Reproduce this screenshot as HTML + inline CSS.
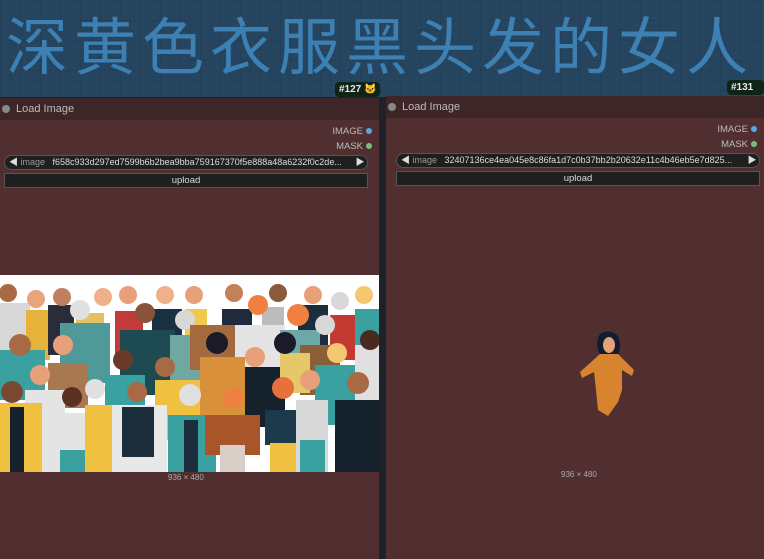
<!DOCTYPE html>
<html><head><meta charset="utf-8"><style>
*{margin:0;padding:0;box-sizing:border-box}
body{width:764px;height:559px;overflow:hidden;background:#1e2228;font-family:"Liberation Sans","Noto Sans CJK SC",sans-serif;position:relative}
.top{position:absolute;left:0;top:0;width:764px;height:97px;background:#264560;background-image:linear-gradient(rgba(0,0,0,.06) 1px,transparent 1px),linear-gradient(90deg,rgba(0,0,0,.06) 1px,transparent 1px);background-size:10px 10px}
.title{position:absolute;left:6px;top:2px;font-size:62px;line-height:80px;color:#3d80b4;letter-spacing:6px;white-space:nowrap;font-family:"Noto Sans CJK SC",sans-serif}
.badge{position:absolute;height:15px;background:#0f2418;color:#e8e8e8;font-size:10px;font-weight:bold;line-height:15px;padding:0 4px;border-radius:4px}
.node{position:absolute;background:#512f31}
.hd{height:22px;background:#3e2528;color:#bbb;font-size:11px;line-height:22px;padding-left:16px;position:relative}
.hd:before{content:"";position:absolute;left:2px;top:7px;width:8px;height:8px;border-radius:50%;background:#888}
.out{position:absolute;right:7px;font-size:9.5px;color:#bbb}
.out i{display:inline-block;width:6px;height:6px;border-radius:50%;margin-left:3px;vertical-align:middle}
.combo{position:absolute;height:15px;background:#1f1f1f;border:1px solid #555;border-radius:8px;font-size:9px;color:#ddd;line-height:13px;padding-left:4px;white-space:nowrap;overflow:hidden}
.combo span{color:#999}
.combo b{position:absolute;right:0;top:0;width:14px;text-align:center;background:#1f1f1f;font-weight:normal}
.btn{position:absolute;height:15px;background:#1f1f1f;border:1px solid #555;font-size:9.5px;color:#ddd;line-height:13px;text-align:center}
.dim{position:absolute;font-size:8px;color:#aaa}
</style></head><body>
<div class="top"><div class="title">深黄色衣服黑头发的女人</div></div>
<div class="badge" style="left:335px;top:82px">#127 🐱</div>
<div class="badge" style="left:727px;top:80px">#131 🐱</div>

<div class="node" style="left:0;top:98px;width:379px;height:461px">
 <div class="hd">Load Image</div>
 <div class="out" style="top:28px">IMAGE<i style="background:#5ea6e0"></i></div>
 <div class="out" style="top:43px">MASK<i style="background:#79c079"></i></div>
 <div class="combo" style="left:4px;top:57px;width:364px">◀ <span>image</span>&nbsp;&nbsp; f658c933d297ed7599b6b2bea9bba759167370f5e888a48a6232f0c2de...<b>▶</b></div>
 <div class="btn" style="left:4px;top:75px;width:364px">upload</div>
 <svg style="position:absolute;left:0;top:177px" width="379" height="197" viewBox="0 0 379 197">
  <rect width="379" height="197" fill="#fff"/>
  <g>
   <rect x="0" y="28" width="30" height="60" fill="#d8d8d8"/><circle cx="8" cy="18" r="9" fill="#a86a45"/>
   <rect x="26" y="35" width="24" height="50" fill="#e7b23a"/><circle cx="36" cy="24" r="9" fill="#e9a47c"/>
   <rect x="48" y="30" width="26" height="50" fill="#2c2c38"/><circle cx="62" cy="22" r="9" fill="#c08060"/>
   <rect x="76" y="38" width="28" height="60" fill="#e3c060"/><circle cx="103" cy="22" r="9" fill="#f0b08a"/>
   <rect x="115" y="36" width="28" height="50" fill="#c33a3a"/><circle cx="128" cy="20" r="9" fill="#e8a07a"/>
   <rect x="152" y="34" width="30" height="50" fill="#18303f"/><circle cx="165" cy="20" r="9" fill="#f0b08a"/>
   <rect x="185" y="34" width="22" height="40" fill="#f0c850"/><circle cx="194" cy="20" r="9" fill="#e8a07a"/>
   <rect x="222" y="34" width="30" height="45" fill="#1f2a3c"/><circle cx="234" cy="18" r="9" fill="#c48058"/>
   <rect x="262" y="32" width="22" height="30" fill="#bcbcbc"/><circle cx="278" cy="18" r="9" fill="#8a5a3a"/>
   <rect x="298" y="30" width="30" height="45" fill="#1c2d3c"/><circle cx="313" cy="20" r="9" fill="#e8a07a"/>
   <rect x="330" y="40" width="40" height="45" fill="#c23a32"/><circle cx="340" cy="26" r="9" fill="#d8d8d8"/>
   <rect x="355" y="34" width="24" height="50" fill="#3aa0a0"/><circle cx="364" cy="20" r="9" fill="#f4c870"/>
  </g>
  <g>
   <rect x="60" y="48" width="50" height="60" fill="#4f9a98"/><circle cx="80" cy="35" r="10" fill="#e0e0e0"/>
   <rect x="120" y="55" width="55" height="65" fill="#1e4b52"/><circle cx="145" cy="38" r="10" fill="#8a5238"/>
   <rect x="170" y="60" width="36" height="65" fill="#6fa8a0"/><circle cx="185" cy="45" r="10" fill="#d8d8d8"/>
   <rect x="190" y="50" width="45" height="45" fill="#a36a40"/>
   <rect x="235" y="50" width="50" height="55" fill="#e4e4e4"/><circle cx="258" cy="30" r="10" fill="#f08040"/>
   <rect x="280" y="55" width="40" height="45" fill="#6ca8a8"/><circle cx="298" cy="40" r="11" fill="#f08040"/>
   <rect x="300" y="70" width="40" height="50" fill="#8a6038"/><circle cx="325" cy="50" r="10" fill="#d8d8d8"/>
   <rect x="0" y="75" width="45" height="50" fill="#3aa0a0"/><circle cx="20" cy="70" r="11" fill="#a86a45"/>
   <rect x="48" y="88" width="40" height="45" fill="#a87850"/><circle cx="63" cy="70" r="10" fill="#e8a07a"/>
   <rect x="105" y="100" width="40" height="50" fill="#3aa0a0"/><circle cx="123" cy="85" r="10" fill="#6a3a28"/>
   <rect x="200" y="82" width="45" height="70" fill="#d8903a"/><circle cx="217" cy="68" r="11" fill="#1a1a28"/>
   <rect x="245" y="92" width="40" height="60" fill="#15222c"/><circle cx="255" cy="82" r="10" fill="#e8a07a"/>
   <rect x="280" y="78" width="30" height="40" fill="#e4c86a"/><circle cx="285" cy="68" r="11" fill="#1a1a28"/>
   <rect x="315" y="90" width="42" height="60" fill="#3aa0a0"/><circle cx="337" cy="78" r="10" fill="#f4c870"/>
   <rect x="355" y="70" width="24" height="60" fill="#e0e0e0"/><circle cx="370" cy="65" r="10" fill="#4a2a20"/>
   <rect x="155" y="105" width="45" height="60" fill="#f0c040"/><circle cx="165" cy="92" r="10" fill="#a86a45"/>
   <rect x="25" y="115" width="40" height="82" fill="#e4e4e4"/><circle cx="40" cy="100" r="10" fill="#e8a07a"/>
  </g>
  <g>
   <rect x="0" y="128" width="42" height="69" fill="#f0c040"/><rect x="10" y="132" width="14" height="65" fill="#15222c"/><circle cx="12" cy="117" r="11" fill="#7a4a30"/>
   <rect x="55" y="138" width="40" height="59" fill="#e4e4e4"/><rect x="60" y="175" width="30" height="22" fill="#3aa0a0"/><circle cx="72" cy="122" r="10" fill="#5a3020"/>
   <rect x="85" y="130" width="30" height="67" fill="#f0c040"/><circle cx="95" cy="114" r="10" fill="#e0e0e0"/>
   <rect x="112" y="130" width="55" height="67" fill="#e8e8e8"/><rect x="122" y="132" width="32" height="50" fill="#1c2d3c"/><circle cx="137" cy="117" r="10" fill="#a86a45"/>
   <rect x="168" y="140" width="48" height="57" fill="#3aa0a0"/><rect x="184" y="145" width="14" height="52" fill="#1c2d3c"/><circle cx="190" cy="120" r="11" fill="#e0e0e0"/>
   <rect x="205" y="140" width="55" height="40" fill="#a8552a"/><rect x="220" y="170" width="25" height="27" fill="#d8d0c8"/><circle cx="233" cy="123" r="10" fill="#f08040"/>
   <rect x="265" y="135" width="40" height="35" fill="#1c3a4c"/><rect x="270" y="168" width="30" height="29" fill="#f0c040"/><circle cx="283" cy="113" r="11" fill="#e8703a"/>
   <rect x="296" y="125" width="32" height="72" fill="#d8d8d8"/><rect x="300" y="165" width="25" height="32" fill="#3aa0a0"/><circle cx="310" cy="105" r="10" fill="#e8a07a"/>
   <rect x="335" y="125" width="44" height="72" fill="#15222c"/><circle cx="358" cy="108" r="11" fill="#a86a45"/>
  </g>
 </svg>
 <div class="dim" style="left:168px;top:375px">936 × 480</div>
</div>

<div class="node" style="left:386px;top:96px;width:378px;height:463px">
 <div class="hd">Load Image</div>
 <div class="out" style="top:28px">IMAGE<i style="background:#5ea6e0"></i></div>
 <div class="out" style="top:43px">MASK<i style="background:#79c079"></i></div>
 <div class="combo" style="left:10px;top:57px;width:364px">◀ <span>image</span>&nbsp;&nbsp; 32407136ce4ea045e8c86fa1d7c0b37bb2b20632e11c4b46eb5e7d825...<b>▶</b></div>
 <div class="btn" style="left:10px;top:75px;width:364px">upload</div>
 <svg style="position:absolute;left:192px;top:234px" width="60" height="90" viewBox="0 0 60 90">
  <path d="M22 4 Q32 -2 40 6 Q44 16 40 24 L22 24 Q16 14 22 4Z" fill="#0f1e2e"/>
  <ellipse cx="31" cy="15" rx="6" ry="8" fill="#e8a07a"/>
  <path d="M22 24 L40 24 L56 40 L54 46 L44 40 L44 60 L40 72 L30 86 L20 80 L18 60 L16 42 L4 48 L2 42Z" fill="#d8832e"/>
 </svg>
 <div class="dim" style="left:175px;top:374px">936 × 480</div>
</div>
</body></html>
